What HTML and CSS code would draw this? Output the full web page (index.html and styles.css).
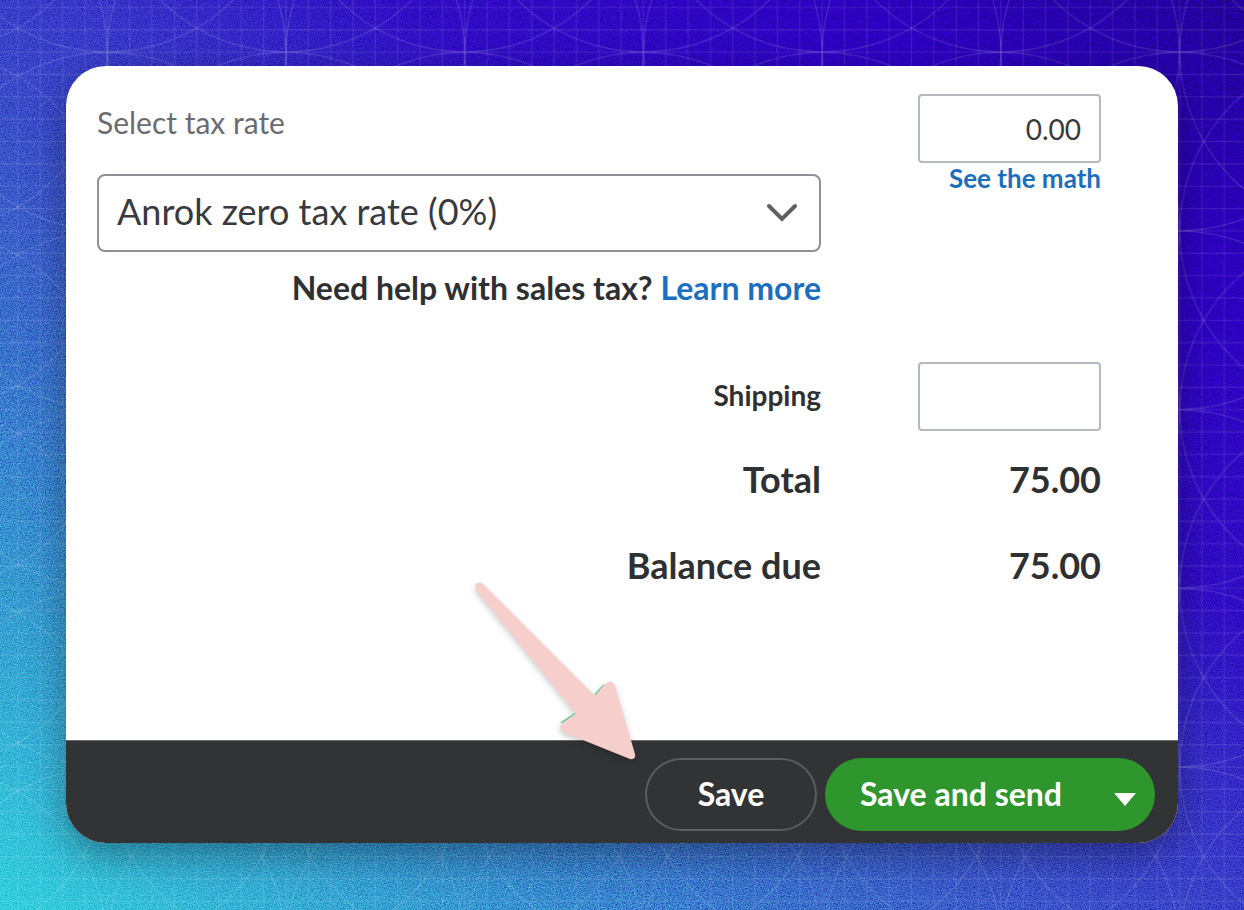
FILE: index.html
```html
<!DOCTYPE html>
<html lang="en">
<head>
    <meta charset="UTF-8">
    <meta name="viewport" content="width=device-width, initial-scale=1.0">
    <title>Invoice totals</title>
    <link rel="stylesheet" href="styles.css">
</head>
<body>
    <svg class="backdrop" aria-hidden="true">
        <defs>
            <pattern id="grid" x="107.3" y="52.2" width="178.72" height="178.72" patternUnits="userSpaceOnUse">
                <path class="grid-line" d="M0 0V179M22.34 0V179M44.68 0V179M67.02 0V179M89.36 0V179M111.7 0V179M134.04 0V179M156.38 0V179M178.72 0V179"/>
                <path class="grid-line" d="M0 0H179M0 22.34H179M0 44.68H179M0 67.02H179M0 89.36H179M0 111.7H179M0 134.04H179M0 156.38H179M0 178.72H179"/>
                <circle class="grid-arc" cx="0" cy="0" r="178.5"/>
                <circle class="grid-arc" cx="178.72" cy="0" r="178.5"/>
                <circle class="grid-arc" cx="0" cy="178.72" r="178.5"/>
                <circle class="grid-arc" cx="178.72" cy="178.72" r="178.5"/>
            </pattern>
            <filter id="grain" x="0" y="0" width="100%" height="100%" color-interpolation-filters="sRGB">
                <feTurbulence type="fractalNoise" baseFrequency="0.75" numOctaves="2" stitchTiles="stitch"/>
                <feColorMatrix type="matrix" values="1.6 0 0 0 -0.3  1.6 0 0 0 -0.3  1.6 0 0 0 -0.3  0 0 0 0 1"/>
            </filter>
        </defs>
        <rect class="grain" width="100%" height="100%" filter="url(#grain)"/>
        <rect width="100%" height="100%" fill="url(#grid)"/>
    </svg>

    <main class="card">
        <form class="totals">
            <div class="tax">
                <label class="tax-label" for="tax-rate">Select tax rate</label>
                <div class="select-box">
                    <select id="tax-rate" class="select">
                        <option>Anrok zero tax rate (0%)</option>
                    </select>
                    <svg class="chevron" viewBox="0 0 32 20" aria-hidden="true">
                        <path d="M3 3L16 16L29 3"/>
                    </svg>
                </div>
                <p class="help">Need help with sales tax? <a href="#">Learn more</a></p>
            </div>
            <div class="tax-amount">
                <input type="text" class="amount" value="0.00" aria-label="Tax amount">
                <a class="math" href="#">See the math</a>
            </div>

            <label class="shipping" for="shipping">Shipping</label>
            <input type="text" id="shipping" class="amount">

            <span class="total">Total</span>
            <span class="total">75.00</span>

            <span class="total">Balance due</span>
            <span class="total">75.00</span>
        </form>

        <footer class="actions">
            <button type="button" class="button save">Save</button>
            <div class="split">
                <button type="button" class="button send">Save and send</button>
                <button type="button" class="button more" aria-label="More options">
                    <svg class="caret" viewBox="0 0 22 13" aria-hidden="true"><path d="M0 0H22L11 13Z"/></svg>
                </button>
            </div>
        </footer>

        <svg class="arrow" viewBox="0 0 170 190" aria-hidden="true">
            <path class="arrow-edge" d="M125 120L134 110M106 138L91 148"/>
            <path class="arrow-body" d="M6 15Q4 11 6 9Q9 6 13 9L125 121L135 109Q142 103 145 111L165 179Q166 185 160 184L93 157Q88 153 92 149L106 138.500Z"/>
        </svg>
    </main>
</body>
</html>
```
FILE: styles.css
```css
* {
    box-sizing: border-box;
}

body {
    font-family: Lato, "Liberation Sans", sans-serif;
    color: #2f3031;
    margin: 0;
    padding: 66px;
    min-height: 100vh;
}

a {
    color: #1b6fbe;
    text-decoration: none;
}

/* background pattern */

.backdrop {
    position: absolute;
    inset: 0;
    width: 100%;
    height: 100%;
    z-index: -1;
    background: linear-gradient(to top right, #32d0dc 0%, #34b4d6 9%, #359ad0 18%, #3878cc 29%, #3a58c8 40%, #3838c8 52%, #2f0cc4 66%, #2d00c0 84%, #21009a 100%);
}

.grain {
    mix-blend-mode: overlay;
    opacity: 0.5;
}

.grid-line {
    fill: none;
    stroke: #fff;
    stroke-opacity: 0.11;
}

.grid-arc {
    fill: none;
    stroke: #fff;
    stroke-opacity: 0.16;
}

/* card */

.card {
    position: relative;
    background: #fff;
    border-radius: 40px;
    box-shadow: 0 12px 36px rgba(0, 0, 0, 0.35);
}

.totals {
    display: grid;
    grid-template-columns: 1fr 183px;
    column-gap: 97px;
    align-items: center;
    padding: 28px 77px 137px 31px;
}

.tax-label {
    display: block;
    color: #6b6c72;
    font-size: 30px;
    line-height: 56px;
    margin-bottom: 24px;
}

.select-box {
    position: relative;
}

.select {
    appearance: none;
    width: 100%;
    height: 78px;
    padding: 0 60px 4px 18px;
    border: 2px solid #8d9096;
    border-radius: 8px;
    background: #fff;
    color: #393a3d;
    font-family: inherit;
    font-size: 36px;
}

.chevron {
    position: absolute;
    right: 23px;
    top: 29px;
    width: 32px;
    height: 20px;
    fill: none;
    stroke: #5f6067;
    stroke-width: 4;
    stroke-linecap: round;
    pointer-events: none;
}

.help {
    margin: 16px 0 54px;
    font-size: 32px;
    font-weight: bold;
    line-height: 40px;
    text-align: right;
}

.tax-amount {
    align-self: start;
    text-align: right;
}

.amount {
    display: block;
    width: 100%;
    height: 69px;
    padding: 0 18px;
    border: 2px solid #b4b8c0;
    border-radius: 4px;
    background: #fff;
    color: #393a3d;
    font-family: inherit;
    font-size: 28px;
    text-align: right;
}

.math {
    font-size: 26px;
    font-weight: bold;
    line-height: 30px;
}

.shipping {
    padding-bottom: 4px;
    font-size: 28px;
    font-weight: bold;
    text-align: right;
}

.total {
    font-size: 36px;
    font-weight: bold;
    line-height: 40px;
    margin-top: 28px;
    padding-bottom: 18px;
    text-align: right;
}

/* footer */

.actions {
    display: flex;
    justify-content: flex-end;
    align-items: center;
    gap: 8px;
    height: 103px;
    padding: 4px 23px 0 0;
    background: #323335;
    border-top: 1px solid #6b6c6e;
    border-radius: 0 0 40px 40px;
}

.button {
    height: 73px;
    padding: 0 0 2px;
    border: none;
    background: none;
    color: #fff;
    font-family: inherit;
    font-size: 32px;
    font-weight: bold;
    cursor: pointer;
}

.save {
    width: 172px;
    border: 2px solid #5c5d63;
    border-radius: 37px;
}

.split {
    display: flex;
    width: 330px;
    background: #2e962c;
    border-radius: 37px;
}

.send {
    flex: 1;
    padding-left: 10px;
}

.more {
    width: 68px;
    padding-left: 8px;
}

.caret {
    width: 22px;
    height: 13px;
    fill: #fff;
}

/* pointer laid over the card */

.arrow {
    position: absolute;
    right: 538px;
    bottom: 78px;
    width: 170px;
    height: 190px;
    overflow: visible;
    filter: drop-shadow(0 3px 3px rgba(0, 0, 0, 0.2));
    pointer-events: none;
}

.arrow-body {
    fill: #f6cfcc;
}

.arrow-edge {
    fill: none;
    stroke: #7cc9a9;
    stroke-width: 2;
}
```
